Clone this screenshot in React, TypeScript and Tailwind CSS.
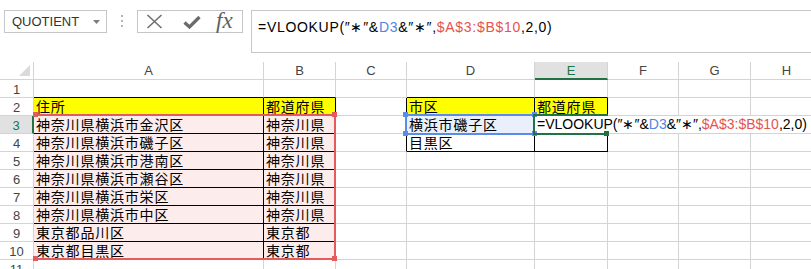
import React from 'react';

const LETTERS = ['', 'A', 'B', 'C', 'D', 'E', 'F', 'G', 'H'];

type CellDef = { text?: string; bg?: string };

const DATA: Record<string, CellDef> = {
  '2-1': { text: '住所', bg: 'bg-[#ffff00]' },
  '2-2': { text: '都道府県', bg: 'bg-[#ffff00]' },
  '3-1': { text: '神奈川県横浜市金沢区', bg: 'bg-[#fcecec]' },
  '3-2': { text: '神奈川県', bg: 'bg-[#fcecec]' },
  '4-1': { text: '神奈川県横浜市磯子区', bg: 'bg-[#fcecec]' },
  '4-2': { text: '神奈川県', bg: 'bg-[#fcecec]' },
  '5-1': { text: '神奈川県横浜市港南区', bg: 'bg-[#fcecec]' },
  '5-2': { text: '神奈川県', bg: 'bg-[#fcecec]' },
  '6-1': { text: '神奈川県横浜市瀬谷区', bg: 'bg-[#fcecec]' },
  '6-2': { text: '神奈川県', bg: 'bg-[#fcecec]' },
  '7-1': { text: '神奈川県横浜市栄区', bg: 'bg-[#fcecec]' },
  '7-2': { text: '神奈川県', bg: 'bg-[#fcecec]' },
  '8-1': { text: '神奈川県横浜市中区', bg: 'bg-[#fcecec]' },
  '8-2': { text: '神奈川県', bg: 'bg-[#fcecec]' },
  '9-1': { text: '東京都品川区', bg: 'bg-[#fcecec]' },
  '9-2': { text: '東京都', bg: 'bg-[#fcecec]' },
  '10-1': { text: '東京都目黒区', bg: 'bg-[#fcecec]' },
  '10-2': { text: '東京都', bg: 'bg-[#fcecec]' },
  '2-4': { text: '市区', bg: 'bg-[#ffff00]' },
  '2-5': { text: '都道府県', bg: 'bg-[#ffff00]' },
  '3-4': { text: '横浜市磯子区', bg: 'bg-[#eaf0fb]' },
  '4-4': { text: '目黒区' },
};

function bordered(r: number, c: number) {
  return (r >= 2 && r <= 10 && (c === 1 || c === 2)) || (r >= 2 && r <= 4 && (c === 4 || c === 5));
}

function Formula({ className }: { className: string }) {
  return (
    <span className={className}>
      <span>=VLOOKUP(″∗″&amp;</span>
      <span className="text-[#4f86e6]">D3</span>
      <span>&amp;″∗″,</span>
      <span className="text-[#e5534f]">$A$3:$B$10</span>
      <span>,2,0)</span>
    </span>
  );
}

function Handle({ className }: { className: string }) {
  return <div className={`absolute w-[5px] h-[5px] ${className}`} />;
}

function TopBar() {
  return (
    <div className="h-[62px] flex items-start">
      <div className="ml-[4px] mt-[10px] w-[103px] h-[23px] border border-[#c6c6c6] flex items-center pl-[7px] pr-[6px] text-[13px] text-[#333]">
        <span className="flex-1 leading-none">QUOTIENT</span>
        <svg width="7" height="4" viewBox="0 0 7 4">
          <path d="M0 0H7L3.5 4Z" fill="#7d7d7d" />
        </svg>
      </div>
      <div className="ml-[14px] mt-[15px] flex flex-col gap-[3px]">
        <div className="w-[2px] h-[2px] bg-[#b5b5b5]" />
        <div className="w-[2px] h-[2px] bg-[#b5b5b5]" />
        <div className="w-[2px] h-[2px] bg-[#b5b5b5]" />
      </div>
      <div className="ml-[14px] mt-[10px] w-[106px] h-[23px] border border-[#c6c6c6] flex items-center pl-[8px]">
        <svg width="17" height="15" viewBox="0 0 17 15">
          <path d="M1.5 1 L15.5 14 M15.5 1 L1.5 14" stroke="#707070" strokeWidth="1.6" fill="none" />
        </svg>
        <svg className="ml-[20px]" width="18" height="14" viewBox="0 0 18 14">
          <path d="M1.5 7.5 L6.5 12 L16.5 2" stroke="#6b6b6b" strokeWidth="3.2" fill="none" />
        </svg>
        <span className="ml-[15px] font-['Liberation_Serif',serif] italic text-[23px] leading-none text-[#5e5e5e] -mt-[2px]">fx</span>
      </div>
      <div className="ml-[8px] mt-[10px] flex-1 h-[43px] border-t border-l border-b border-[#c6c6c6] pl-[6px] pt-[4px]">
        <Formula className="font-['Liberation_Sans',sans-serif] text-[14px] tracking-[0.7px] leading-[18px] text-black whitespace-nowrap" />
      </div>
    </div>
  );
}

function Sheet() {
  const cells: React.ReactNode[] = [];
  cells.push(
    <div key="corner" className="h-[18px] border-r border-b border-r-[#d4d4d4] border-b-[#d4d4d4] flex items-end justify-end pr-[3px] pb-[3px]">
      <svg width="11" height="11" viewBox="0 0 11 11">
        <path d="M11 0V11H0Z" fill="#dadada" />
      </svg>
    </div>
  );
  for (let c = 1; c <= 8; c++) {
    const sel = c === 5;
    cells.push(
      <div
        key={`h-${c}`}
        className={
          sel
            ? 'h-[18px] border-r border-r-[#d4d4d4] border-b-2 border-b-[#217346] bg-[#e1e1e1] flex items-center justify-center text-[13px] text-[#217346] leading-none pt-[1px]'
            : 'h-[18px] border-r border-b border-r-[#d4d4d4] border-b-[#d4d4d4] flex items-center justify-center text-[13px] text-[#444] leading-none'
        }
      >
        {LETTERS[c]}
      </div>
    );
  }
  for (let r = 1; r <= 11; r++) {
    const selRow = r === 3;
    cells.push(
      <div
        key={`r-${r}`}
        className={
          selRow
            ? 'h-[18px] border-r-2 border-r-[#217346] border-b border-b-[#d4d4d4] bg-[#e1e1e1] flex items-center justify-center text-[13px] text-[#217346] leading-none pt-[2px]'
            : 'h-[18px] border-r border-b border-r-[#d4d4d4] border-b-[#d4d4d4] flex items-center justify-center text-[13px] text-[#444] leading-none pt-[2px]'
        }
      >
        {r}
      </div>
    );
    for (let c = 1; c <= 8; c++) {
      if (r === 3 && c === 5) {
        cells.push(
          <div
            key={`${r}-${c}`}
            className="col-span-4 h-[18px] border-b border-b-[#d4d4d4] bg-white flex items-end pl-[2px] whitespace-nowrap overflow-visible"
          >
            <Formula className="font-['Liberation_Sans',sans-serif] text-[14px] leading-[17px] text-black" />
          </div>
        );
        continue;
      }
      if (r === 3 && c > 5) continue;
      const d = DATA[`${r}-${c}`];
      const right = bordered(r, c) || bordered(r, c + 1) ? 'border-r-black' : 'border-r-[#d4d4d4]';
      const bottom = bordered(r, c) || bordered(r + 1, c) ? 'border-b-black' : 'border-b-[#d4d4d4]';
      cells.push(
        <div
          key={`${r}-${c}`}
          className={`h-[18px] border-r border-b ${right} ${bottom} ${d?.bg ?? 'bg-white'} flex items-end whitespace-nowrap overflow-visible`}
        >
          {d?.text && (
            <span className="pl-[2px] font-['Noto_Sans_CJK_JP',sans-serif] text-[14px] tracking-[0.8px] leading-[17px] text-black">
              {d.text}
            </span>
          )}
        </div>
      );
    }
  }

  return (
    <div className="relative">
      <div className="grid grid-cols-[34px_230px_72px_71px_128px_73px_71px_72px_72px] w-[823px]">{cells}</div>
      {/* red reference range A3:B10 */}
      <div className="absolute left-[34px] top-[52px] w-[302px] h-[146px] border-2 border-l-0 border-[#e35b5b]">
        <Handle className="-left-[1px] -top-[4px] bg-[#e35b5b]" />
        <Handle className="-right-[3px] -top-[4px] bg-[#e35b5b]" />
        <Handle className="-left-[1px] -bottom-[3px] bg-[#e35b5b]" />
        <Handle className="-right-[3px] -bottom-[3px] bg-[#e35b5b]" />
      </div>
      {/* blue reference D3 */}
      <div className="absolute left-[405px] top-[52px] w-[130px] h-[21px] border-2 border-[#5b8de8]">
        <Handle className="-left-[4px] -top-[4px] bg-[#5b8de8]" />
        <Handle className="-right-[4px] -top-[4px] bg-[#5b8de8]" />
        <Handle className="-left-[4px] -bottom-[3px] bg-[#5b8de8]" />
        <Handle className="-right-[4px] -bottom-[3px] bg-[#5b8de8]" />
      </div>
      {/* active cell E3 */}
      <div className="absolute left-[533px] top-[52px] w-[75px] h-[21px] border-2 border-r-0 border-[#217346]">
        <Handle className="-right-[1px] -bottom-[3px] bg-[#217346]" />
      </div>
    </div>
  );
}

export default function App() {
  return (
    <div className="w-[811px] h-[269px] overflow-hidden bg-white font-['Liberation_Sans',sans-serif] text-[#444]">
      <TopBar />
      <Sheet />
    </div>
  );
}
